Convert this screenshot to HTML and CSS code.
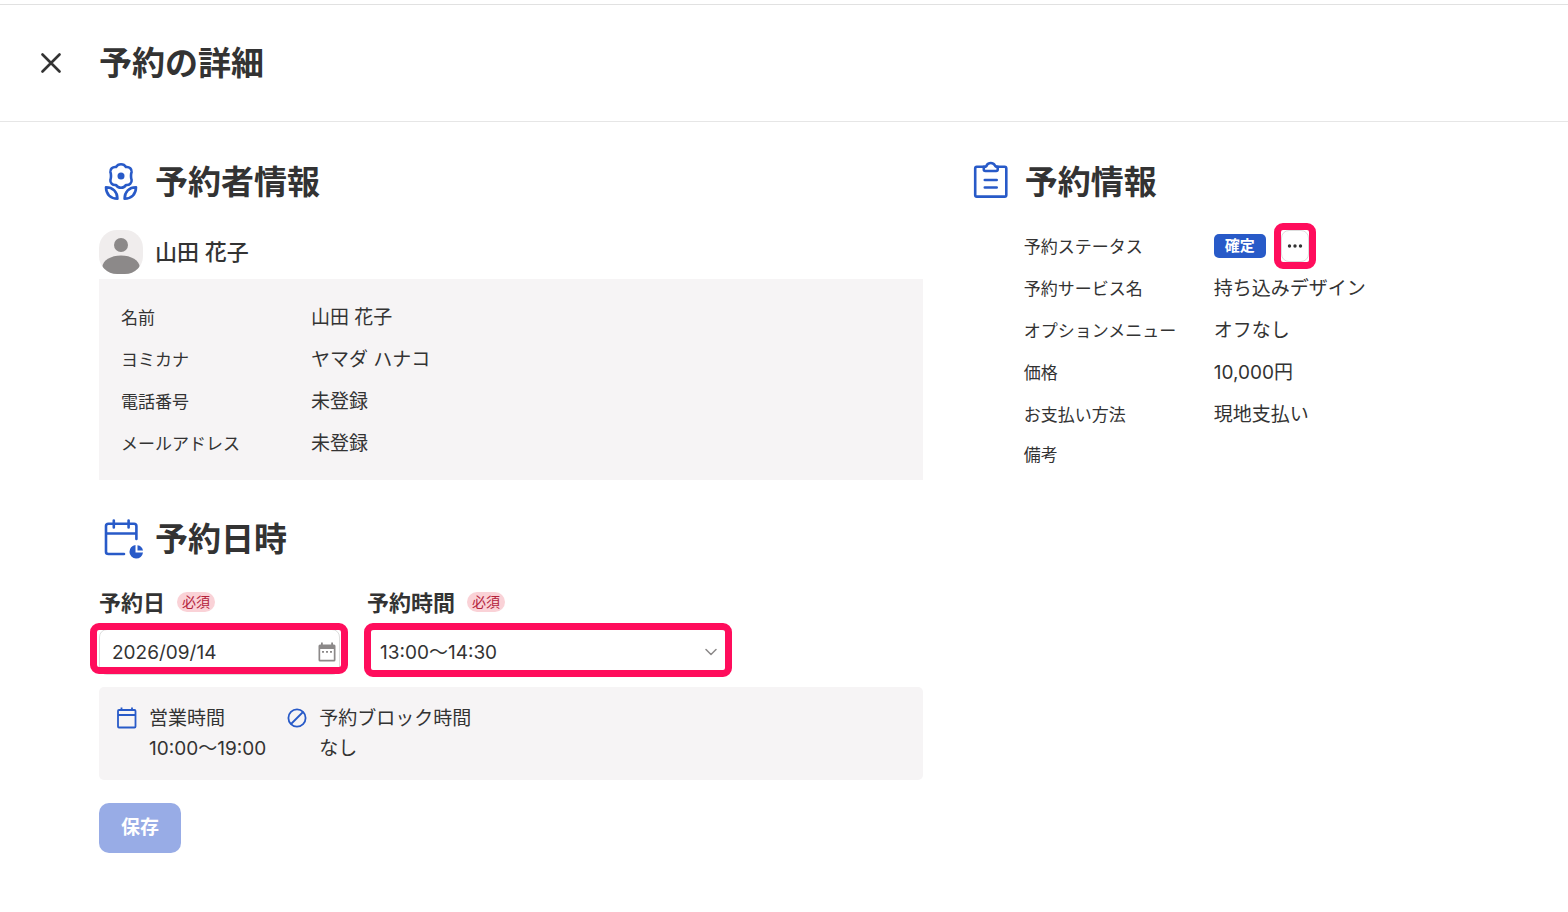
FILE: index.html
```html
<!DOCTYPE html>
<html lang="ja">
<head>
  <meta charset="UTF-8">
  <title>予約の詳細</title>
  <link rel="stylesheet" href="styles.css">
</head>

<body>
  <header class="page-header">
    <button type="button" class="close-button" aria-label="閉じる">
      <svg width="20" height="20" viewBox="0 0 20 20" fill="none" stroke="#333" stroke-width="2.6" stroke-linecap="round">
        <path d="M1.500 1.500l17 17M18.500 1.500l-17 17"/>
      </svg>
    </button>
    <h1>予約の詳細</h1>
  </header>

  <main class="container">
    <div class="main-column">
      <section class="customer-section">
        <h2 class="section-title">
          <svg class="section-icon" width="44" height="44" viewBox="0 0 44 44" fill="none" stroke="#285ac8" stroke-width="2.600" stroke-linejoin="round">
            <path d="M22 4.200C24.500 4.200 26 5.300 27 7C30.500 6.500 33 9 32.600 12C32 13.500 32 14.500 32 16C32 17.500 32 18.500 32.600 20C33 23 30.500 25.500 27 25C26 26.700 24.500 27.800 22 27.800C19.500 27.800 18 26.700 17 25C13.500 25.500 11 23 11.400 20C12 18.500 12 17.500 12 16C12 14.500 12 13.500 11.400 12C11 9 13.500 6.500 17 7C18 5.300 19.500 4.200 22 4.200z"/>
            <circle cx="22" cy="16" r="3.500" fill="#285ac8" stroke="none"/>
            <path d="M7 27.300C13.800 27.300 18.400 31.700 18.400 38.700C11.500 38.700 7 34.200 7 27.300zM37 27.300C30.200 27.300 25.600 31.700 25.600 38.700C32.500 38.700 37 34.200 37 27.300z"/>
          </svg>
          予約者情報
        </h2>
        <div class="customer">
          <svg width="44" height="44" viewBox="0 0 44 44">
            <defs>
              <clipPath id="avatarClip"><rect width="44" height="44" rx="18"/></clipPath>
            </defs>
            <g clip-path="url(#avatarClip)">
              <rect width="44" height="44" fill="#f0eded"/>
              <circle cx="22" cy="15" r="7" fill="#8c8989"/>
              <ellipse cx="22" cy="37" rx="18.500" ry="11.500" fill="#8c8989"/>
            </g>
          </svg>
          <span class="customer-name">山田 花子</span>
        </div>
        <dl class="details details-box">
          <dt>名前</dt>
          <dd>山田 花子</dd>
          <dt>ヨミカナ</dt>
          <dd>ヤマダ ハナコ</dd>
          <dt>電話番号</dt>
          <dd>未登録</dd>
          <dt>メールアドレス</dt>
          <dd>未登録</dd>
        </dl>
      </section>

      <section class="date-section">
        <h2 class="section-title">
          <svg class="section-icon" width="44" height="44" viewBox="0 0 44 44" fill="none" stroke="#285ac8" stroke-width="2.600" stroke-linecap="round" stroke-linejoin="round">
            <path d="M25 37H9.500C7.800 37 7 36.200 7 35V9C7 7.500 7.800 6.800 9.500 6.800H35C36.600 6.800 37.400 7.500 37.400 9V22M7 16.500H37.400M14.800 3.500V10.500M29.600 3.500V10.500"/>
            <path d="M36.500 28A6.800 6.800 0 1 0 44 35.500H36.500z" fill="#285ac8" stroke="none"/>
            <path d="M38.500 28.200V33.500H44A6.500 6.500 0 0 0 38.500 28.200z" fill="#285ac8" stroke="none"/>
          </svg>
          予約日時
        </h2>

        <form class="date-form">
          <div class="fields">
            <div class="field field-date">
              <div class="field-label">
                <label for="dateInput">予約日</label>
                <span class="required">必須</span>
              </div>
              <div class="control highlight">
                <input type="text" id="dateInput" value="2026/09/14">
                <svg class="control-icon" width="18" height="20" viewBox="0 0 18 20">
                  <path fill="#8c8989" fill-rule="evenodd" d="M3 0.500h1.800V2.500h8.400V0.500H15V2.500H16Q17.500 2.500 17.500 4V18Q17.500 19.500 16 19.500H2Q0.500 19.500 0.500 18V4Q0.500 2.500 2 2.500H3zM2.200 7V17.800H15.800V7z"/>
                  <path fill="#8c8989" d="M4 9h2v1.800H4zM8 9h2v1.800H8zM12 9h2v1.800h-2z"/>
                </svg>
              </div>
            </div>
            <div class="field field-time">
              <div class="field-label">
                <label for="timeSelect">予約時間</label>
                <span class="required">必須</span>
              </div>
              <div class="control highlight">
                <select id="timeSelect">
                  <option>13:00〜14:30</option>
                </select>
                <svg class="control-icon" width="12" height="8" viewBox="0 0 12 8" fill="none" stroke="#8c8989" stroke-width="1.500" stroke-linecap="round" stroke-linejoin="round">
                  <path d="M1 1.500l5 5 5-5"/>
                </svg>
              </div>
            </div>
          </div>

          <div class="hours-box">
            <div class="hours-item">
              <svg width="22" height="22" viewBox="0 0 22 22" fill="none" stroke="#285ac8" stroke-width="1.800">
                <rect x="2" y="3" width="17.500" height="17.500" rx="1"/>
                <path d="M2 8h17.500M5.500 0.500V3M16 0.500V3"/>
              </svg>
              <div>営業時間<br>10:00〜19:00</div>
            </div>
            <div class="hours-item">
              <svg width="22" height="22" viewBox="0 0 22 22" fill="none" stroke="#285ac8" stroke-width="1.800">
                <circle cx="11" cy="11" r="8.600"/>
                <path d="M5 17L17 5"/>
              </svg>
              <div>予約ブロック時間<br>なし</div>
            </div>
          </div>

          <button type="submit" class="save-button" disabled>保存</button>
        </form>
      </section>
    </div>

    <section class="side-column">
      <h2 class="section-title">
        <svg class="section-icon" width="44" height="44" viewBox="0 0 44 44" fill="none" stroke="#285ac8" stroke-width="2.600" stroke-linecap="round" stroke-linejoin="round">
          <path d="M16 6.800H7.800Q6.200 6.800 6.200 8.400V35Q6.200 36.600 7.800 36.600H35.700Q37.300 36.600 37.300 35V8.400Q37.300 6.800 35.700 6.800H27.500"/>
          <path d="M14.800 6.800Q17.500 6.800 17.800 5.200Q19 3 21.800 3Q24.500 3 25.700 5.200Q26.200 6.800 28.700 6.800V9.500Q28.700 11 27.200 11H16.300Q14.800 11 14.800 9.500z"/>
          <path d="M15.800 20H27.700M15.800 27.500H27.700"/>
        </svg>
        予約情報
      </h2>
      <dl class="details details-side">
        <dt>予約ステータス</dt>
        <dd class="status">
          <span class="badge">確定</span>
          <span class="highlight menu-wrap">
            <button type="button" class="menu-button" aria-label="メニュー">
              <svg width="16" height="4" viewBox="0 0 16 4" fill="#333">
                <circle cx="2.500" cy="2" r="1.700"/><circle cx="8" cy="2" r="1.700"/><circle cx="13.500" cy="2" r="1.700"/>
              </svg>
            </button>
          </span>
        </dd>
        <dt>予約サービス名</dt>
        <dd>持ち込みデザイン</dd>
        <dt>オプションメニュー</dt>
        <dd>オフなし</dd>
        <dt>価格</dt>
        <dd>10,000円</dd>
        <dt>お支払い方法</dt>
        <dd>現地支払い</dd>
        <dt>備考</dt>
        <dd></dd>
      </dl>
    </section>
  </main>
</body>
</html>
```
FILE: styles.css
```css
* {
  box-sizing: border-box;
}

body {
  margin: 0;
  padding-top: 4px;
  background-color: #fff;
  color: #333;
  font-family: Inter, "Noto Sans CJK JP", sans-serif;
  font-size: 19px;
}

h1,
h2 {
  margin: 0;
  font-size: 33px;
  line-height: 44px;
  font-weight: bold;
}

button {
  font-family: inherit;
  cursor: pointer;
}

svg {
  display: block;
  flex-shrink: 0;
}

.page-header {
  display: flex;
  align-items: center;
  gap: 26px;
  padding: 36px 29px;
  border-top: 1px solid #e1e1e1;
  border-bottom: 1px solid #e6e6e6;
}

.close-button {
  display: flex;
  padding: 12px;
  border: none;
  background: none;
}

.container {
  display: grid;
  grid-template-columns: 3fr 2fr;
  gap: 46px;
  padding: 38px 50px 59px 99px;
}

.section-title {
  display: flex;
  align-items: center;
  gap: 12px;
}

.customer {
  display: flex;
  align-items: center;
  gap: 12px;
  margin: 26px 0 5px;
}

.customer-name {
  padding-bottom: 5px;
  font-size: 22px;
  font-weight: 500;
}

.details {
  display: grid;
  grid-template-columns: 190px 1fr;
  grid-auto-rows: 42px;
  align-items: center;
  margin: 0;
}

.details dt {
  padding-bottom: 2px;
  font-size: 17px;
}

.details dd {
  margin: 0;
  padding-bottom: 4px;
}

.details-box {
  padding: 17px 22px 16px;
  background-color: #f6f4f5;
}

.details-side {
  grid-template-rows: repeat(5, 42px) 38px;
  margin-top: 21px;
  padding-left: 55px;
}

.details .status {
  display: flex;
  align-items: center;
  gap: 15px;
  padding-bottom: 0;
}

.badge {
  padding: 0 11px;
  border-radius: 5px;
  background-color: #285ac8;
  color: #fff;
  font-size: 15px;
  line-height: 24px;
  font-weight: bold;
}

.menu-button {
  display: flex;
  align-items: center;
  justify-content: center;
  width: 28px;
  height: 32px;
  padding: 0;
  border: 1px solid #ddd;
  border-radius: 8px;
  background-color: #fff;
}

/* Frame round the parts the user can change */
.highlight {
  position: relative;
}

.highlight::after {
  content: "";
  position: absolute;
  inset: -7px;
  border: 7px solid #ff0d5c;
  border-radius: 9px;
  pointer-events: none;
}

.date-section {
  margin-top: 37px;
}

.fields {
  display: flex;
  gap: 27px;
  margin-top: 27px;
}

.field-date {
  width: 241px;
}

.field-time {
  width: 362px;
}

.field-label {
  display: flex;
  align-items: center;
  gap: 12px;
  height: 28px;
  margin-bottom: 13px;
}

.field-label label {
  padding-bottom: 2px;
  font-size: 22px;
  font-weight: bold;
}

.required {
  padding: 0 5px;
  border-radius: 10px;
  background-color: #fad2d7;
  color: #b4233c;
  font-size: 14px;
  line-height: 20px;
}

.control input,
.control select {
  display: block;
  width: 100%;
  height: 46px;
  padding: 0 12px;
  border: 1px solid #ddd;
  border-radius: 8px;
  background-color: #fff;
  color: #333;
  font-family: inherit;
  font-size: 19px;
  appearance: none;
}

.control-icon {
  position: absolute;
  top: 50%;
  right: 4px;
  transform: translateY(-50%);
}

.field-date .highlight::after {
  inset: -6px -8px 1px -9px;
}

.field-time .highlight::after {
  inset: -6px -3px -2px;
}

.field-time .control-icon {
  right: 12px;
}

.hours-box {
  display: flex;
  gap: 20px;
  margin: 12px 0 23px;
  padding: 17px 17px 16px;
  border-radius: 5px;
  background-color: #f6f4f5;
  line-height: 30px;
}

.hours-item {
  display: flex;
  gap: 11px;
}

.hours-item svg {
  margin-top: 3px;
}

.save-button {
  display: block;
  padding: 0 22px;
  border: none;
  border-radius: 10px;
  background-color: #98ace6;
  color: #fff;
  font-size: 19px;
  line-height: 50px;
  font-weight: bold;
}
```
